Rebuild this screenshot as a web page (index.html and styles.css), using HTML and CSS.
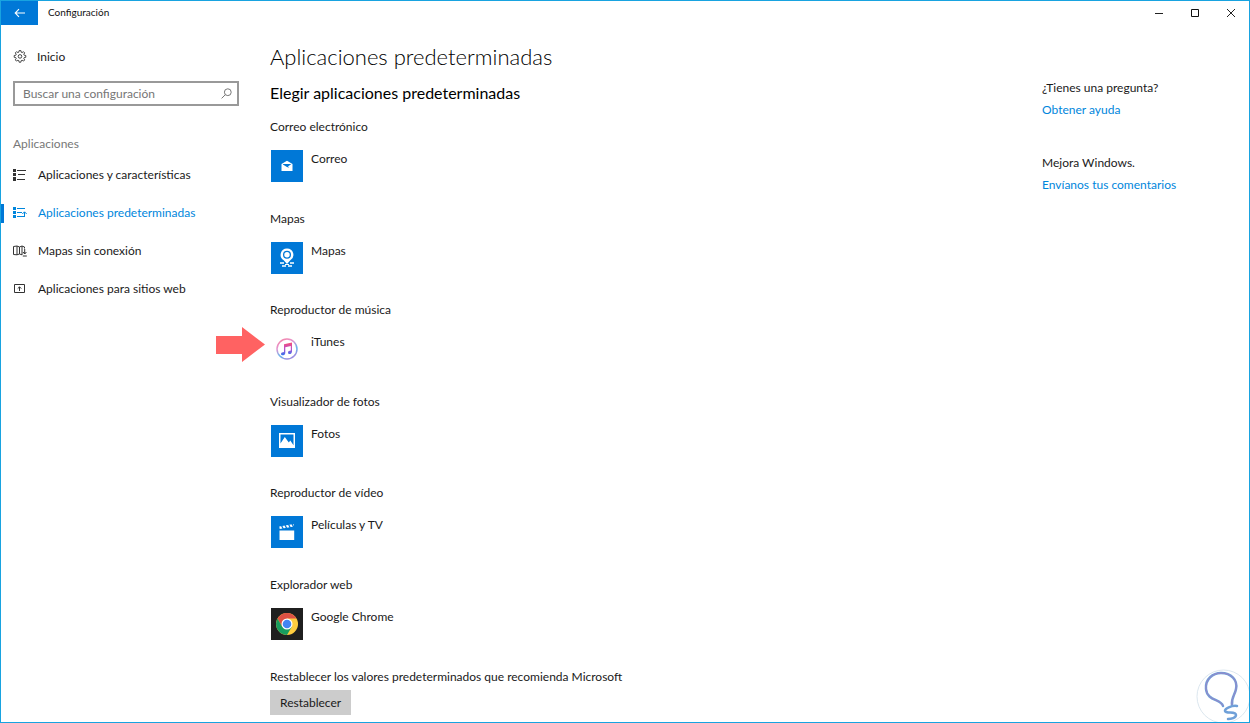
FILE: index.html
```html
<!DOCTYPE html>
<html lang="es">
<head>
<meta charset="utf-8">
<title>Configuración</title>
<link rel="stylesheet" href="styles.css">
</head>
<body>
<div class="window">
  <header class="titlebar">
    <button class="back" type="button" aria-label="Atrás">
      <svg width="12" height="10" viewBox="0 0 12 10" fill="none" stroke="#fff" stroke-width="1.1"><path d="M11 5H1.5M5 1.2 1.2 5 5 8.8"/></svg>
    </button>
    <span class="caption">Configuración</span>
    <div class="controls">
      <button type="button" aria-label="Minimizar"><svg width="10" height="10" viewBox="0 0 10 10"><path d="M1 5.5h8" stroke="#222"/></svg></button>
      <button type="button" aria-label="Maximizar"><svg width="10" height="10" viewBox="0 0 10 10"><path d="M1.500 1.500h7v7h-7z" fill="none" stroke="#111"/></svg></button>
      <button type="button" aria-label="Cerrar"><svg width="10" height="10" viewBox="0 0 10 10"><path d="m1 1 8 8M9 1 1 9" stroke="#222"/></svg></button>
    </div>
  </header>
  <div class="body">
    <aside class="sidebar">
      <a class="home" href="#">
        <svg class="nav-icon" viewBox="0 0 14 14" fill="none" stroke="#333" stroke-width=".9"><path d="M5.800 2.200 6.100.600h1.800l.3 1.600.9.400 1.400-.9 1.200 1.200-.9 1.400.4.900 1.600.3v1.800l-1.600.3-.4.900.9 1.400-1.200 1.200-1.400-.9-.9.400-.3 1.600H6.100l-.3-1.600-.9-.4-1.400.9-1.200-1.200.9-1.400-.4-.9-1.600-.3V5.500l1.600-.3.400-.9-.9-1.400 1.200-1.200 1.400.9z"/><circle cx="7" cy="6.400" r="1.800"/></svg>
        <span>Inicio</span>
      </a>
      <div class="search">
        <input type="text" aria-label="Buscar una configuración" placeholder="Buscar una configuración">
        <svg width="11" height="11" viewBox="0 0 11 11" fill="none" stroke="#777"><circle cx="6.800" cy="4.200" r="3.400"/><path d="M4.400 6.600.6 10.400"/></svg>
      </div>
      <h2 class="group">Aplicaciones</h2>
      <nav class="nav">
        <a href="#">
          <svg class="nav-icon" viewBox="0 0 14 14"><path d="M0 1h3v3H0zM0 5h3v3H0zM0 9h3v4H0z" fill="#333"/><path d="M4 2.500h9M5 6.500h7M4 11.500h8" stroke="#333"/></svg>
          <span>Aplicaciones y características</span>
        </a>
        <a class="active" href="#" aria-current="page">
          <svg class="nav-icon" viewBox="0 0 14 14" fill="none" stroke="#0086dc"><path d="M0 1h3v3H0zM0 5h3v3H0zM0 9h3v3H0z" fill="#0086dc" stroke="none"/><path d="M4 2.500h8M4 6.500h5M4 10.500h7M11.500 11V6M9.300 8l2.200-2.200L13.700 8"/></svg>
          <span>Aplicaciones predeterminadas</span>
        </a>
        <a href="#">
          <svg class="nav-icon" viewBox="0 0 14 14" fill="none" stroke="#333"><path d="M9 10.800 6.500 10 4 10.800.5 10.500v-8L4 2l2.500 1L9 2l2.500 1v1.500M4 2v9M6.500 3v7M9 2v9M11.700 5v5M10 8l1.700 2 1.700-2M9.800 12h4"/></svg>
          <span>Mapas sin conexión</span>
        </a>
        <a href="#">
          <svg class="nav-icon" viewBox="0 0 14 14" fill="none" stroke="#333"><path d="M1.500 2.500h10v8h-10zM6.500 9V5M4.700 6.600 6.500 4.800l1.800 1.800"/></svg>
          <span>Aplicaciones para sitios web</span>
        </a>
      </nav>
    </aside>

    <main class="content">
      <h1>Aplicaciones predeterminadas</h1>
      <h2>Elegir aplicaciones predeterminadas</h2>
      <div class="defaults">
        <section>
          <h3>Correo electrónico</h3>
          <button class="app" type="button">
            <svg class="tile" viewBox="0 0 32 32"><path fill="#0078d7" d="M0 0h32v32H0z"/><path fill="#fff" d="M10.500 14 16 10.800l5.500 3.200v7h-11z"/><path fill="#0078d7" d="M12 14h8.400L17 16.500l1.400 1.200-2.500-.8-4-2.300z"/></svg>
            <span>Correo</span>
          </button>
        </section>
        <section>
          <h3>Mapas</h3>
          <button class="app" type="button">
            <svg class="tile" viewBox="0 0 32 32"><path fill="#0078d7" d="M0 0h32v32H0z"/><path fill="#fff" fill-rule="evenodd" d="M16 6.500a6.300 6.300 0 0 1 3.300 11.700L16 22l-3.300-3.800A6.300 6.300 0 0 1 16 6.500zm0 2.200a4 4 0 1 0 0 8 4 4 0 0 0 0-8z"/><circle cx="16" cy="12.700" r="2.700" fill="#fff"/><path d="M9 21h4M19 21h4M11 24h4M17 24h4" stroke="#fff" stroke-width="1.700"/><path d="M14 22.500h4" stroke="#fff"/></svg>
            <span>Mapas</span>
          </button>
        </section>
        <section>
          <h3>Reproductor de música</h3>
          <button class="app" type="button">
            <svg class="tile" viewBox="0 0 32 32">
              <defs>
                <linearGradient id="ring" x1="0" y1="0" x2=".5" y2="1"><stop offset="0" stop-color="#fb7f9d"/><stop offset=".4" stop-color="#e296d2"/><stop offset=".75" stop-color="#66b5ed"/><stop offset="1" stop-color="#9b8de0"/></linearGradient>
                <linearGradient id="note" x1="0" y1="0" x2="0" y2="1"><stop offset="0" stop-color="#fb4e72"/><stop offset=".5" stop-color="#b64fd0"/><stop offset="1" stop-color="#2d75ef"/></linearGradient>
              </defs>
              <circle cx="16" cy="16" r="10" fill="#fff" stroke="url(#ring)" stroke-width="1.500"/>
              <path fill="url(#note)" d="M13 11.200 21 9.500v9c0 3-4 3.300-4 1.200 0-1.700 1.500-1.900 2.800-2.100v-4.500l-5.500 1.200v5.500c0 3-4.300 3.300-4.300 1.200 0-1.700 1.700-1.900 3-2.100z"/>
            </svg>
            <span>iTunes</span>
          </button>
          <svg class="pointer" width="49" height="36" viewBox="0 0 49 36" aria-hidden="true"><path fill="#ff6262" d="M0 9h26V0l23 17.500L26 35v-8H0z"/></svg>
        </section>
        <section>
          <h3>Visualizador de fotos</h3>
          <button class="app" type="button">
            <svg class="tile" viewBox="0 0 32 32"><path fill="#0078d7" d="M0 0h32v32H0z"/><path fill="#fff" d="M8 8h16v15H8z"/><path fill="#0078d7" d="M9.500 9.500h13v10.700l-3.200-4.700-1.500 2-4-5.500-4.300 6.500z"/><path fill="#fff" d="m9 20 4.700-7 6.800 9H9z"/></svg>
            <span>Fotos</span>
          </button>
        </section>
        <section>
          <h3>Reproductor de vídeo</h3>
          <button class="app" type="button">
            <svg class="tile" viewBox="0 0 32 32"><path fill="#0078d7" d="M0 0h32v32H0z"/><path fill="#fff" d="M8.500 14.500h14.700V24H8.500z"/><path d="m8.500 11.700 14.300-2.500" stroke="#fff" stroke-width="2.500"/><path d="m10.500 9.500 2 4M14 9l2 4M17.500 8.300l2 4M21 7.700l2 4" stroke="#0078d7" stroke-width="1.300"/></svg>
            <span>Películas y TV</span>
          </button>
        </section>
        <section>
          <h3>Explorador web</h3>
          <button class="app" type="button">
            <svg class="tile" viewBox="0 0 32 32"><path fill="#1f1f1f" d="M0 0h32v32H0z"/><circle cx="16" cy="16" r="11" fill="#ffcd40"/><path fill="#dd5144" d="M6.500 10.500a11 11 0 0 1 19 0H16v5.500l-4.800 2.800z"/><path fill="#179c5f" d="M6.500 10.500a11 11 0 0 0 9.500 16.500l4.800-8.300L16 21l-4.800-2.300z"/><circle cx="16" cy="16" r="5.500" fill="#fff"/><circle cx="16" cy="16" r="4.300" fill="#4285f4"/></svg>
            <span>Google Chrome</span>
          </button>
        </section>
      </div>
      <p id="reset-text">Restablecer los valores predeterminados que recomienda Microsoft</p>
      <button class="reset" type="button" aria-describedby="reset-text">Restablecer</button>
    </main>

    <aside class="help">
      <section>
        <p>¿Tienes una pregunta?</p>
        <a href="#">Obtener ayuda</a>
      </section>
      <section>
        <p>Mejora Windows.</p>
        <a href="#">Envíanos tus comentarios</a>
      </section>
    </aside>
  </div>
  <svg class="watermark" viewBox="0 0 54 54" aria-hidden="true"><circle cx="27.500" cy="27.500" r="26.500" fill="#fff" stroke="#dce7ef"/><g fill="none" stroke="#6fa0d8" stroke-width="2.500" stroke-linecap="round"><path d="M27 37c-2-7-16-5-17-17C9 10 17 4 25 4c10 0 17 7 15 16-1 6-5 9-4 16"/><path d="M41 37c-5-1-13 3-12 5 1 3 11 0 11 4 0 3-5 4-8 4"/></g><path fill="none" stroke="#9a83c8" d="M27 37c-2-7-16-5-17-17C9 10 17 4 25 4c10 0 17 7 15 16-1 6-5 9-4 16"/></svg>
</div>
</body>
</html>
```

FILE: styles.css
```css
* { box-sizing: border-box; }

body {
  margin: 0;
  background: #fff;
  color: #1a1a1a;
  font: 12px/18px Lato, "Open Sans", sans-serif;
}

h1, h2, h3, p { margin: 0; font-weight: 400; }
h3, p { font-size: 12px; line-height: 18px; }
a { color: inherit; text-decoration: none; }
button { font: inherit; color: inherit; border: 0; padding: 0; background: none; }
svg { display: block; flex: none; }

.window {
  position: relative;
  display: flex;
  flex-direction: column;
  min-height: 100vh;
  border: 1px solid #18a3e0;
  overflow: hidden;
}

.titlebar { display: flex; align-items: stretch; height: 24px; }
.back { display: grid; place-items: center; width: 37px; background: #0078d7; }
.caption { margin-left: 10px; font-size: 10px; line-height: 22px; color: #111; }
.controls { display: flex; margin-left: auto; }
.controls button { display: grid; place-items: center; width: 36px; }

.body { flex: 1; display: flex; }

.sidebar { width: 250px; padding-top: 20px; }
.home { display: flex; align-items: center; gap: 10px; height: 24px; padding-left: 12px; }
.nav-icon { width: 14px; height: 14px; }

.search {
  display: flex;
  align-items: center;
  height: 25px;
  margin: 12px 12px 0 12px;
  padding: 0 5px 0 8px;
  border: 2px solid #999;
}
.search input {
  flex: 1;
  min-width: 0;
  padding: 0;
  border: 0;
  outline: 0;
  background: none;
  color: #333;
  font: inherit;
}
.search input::placeholder { color: #767676; opacity: 1; }

.group { margin: 29px 0 3px 12px; font-size: 12px; line-height: 18px; color: #777; }
.nav a { display: flex; align-items: center; gap: 11px; height: 38px; padding-left: 12px; }
.nav .active {
  color: #0086dc;
  background: linear-gradient(#0078d7, #0078d7) left center / 3px 19px no-repeat;
}

.content {
  flex: 1;
  display: flex;
  flex-direction: column;
  align-items: flex-start;
  padding: 16px 16px 7px 19px;
}
.content h1 { font-size: 22px; font-weight: 300; line-height: 32px; color: #000; }
.content h2 { margin: 8px 0 13px; font-size: 16px; line-height: 24px; color: #000; }

.defaults { flex: 1; display: grid; grid-auto-rows: 1fr; }
.defaults section { position: relative; }
.app { display: flex; align-items: flex-start; gap: 8px; margin-top: 14px; padding-left: 1px; }
.tile { width: 32px; height: 32px; }
.pointer { position: absolute; right: 100%; top: 26px; margin-right: 5px; }

.content p { margin: 1px 0 4px; }
.reset { height: 25px; padding: 0 10px; background: #ccc; }

.help { width: 207px; padding-top: 52px; }
.help p, .help a { display: block; line-height: 22px; }
.help section { margin-bottom: 31px; }
.help a { color: #0086dc; }

.watermark { position: absolute; right: -1px; bottom: -1px; width: 54px; height: 54px; }
```
